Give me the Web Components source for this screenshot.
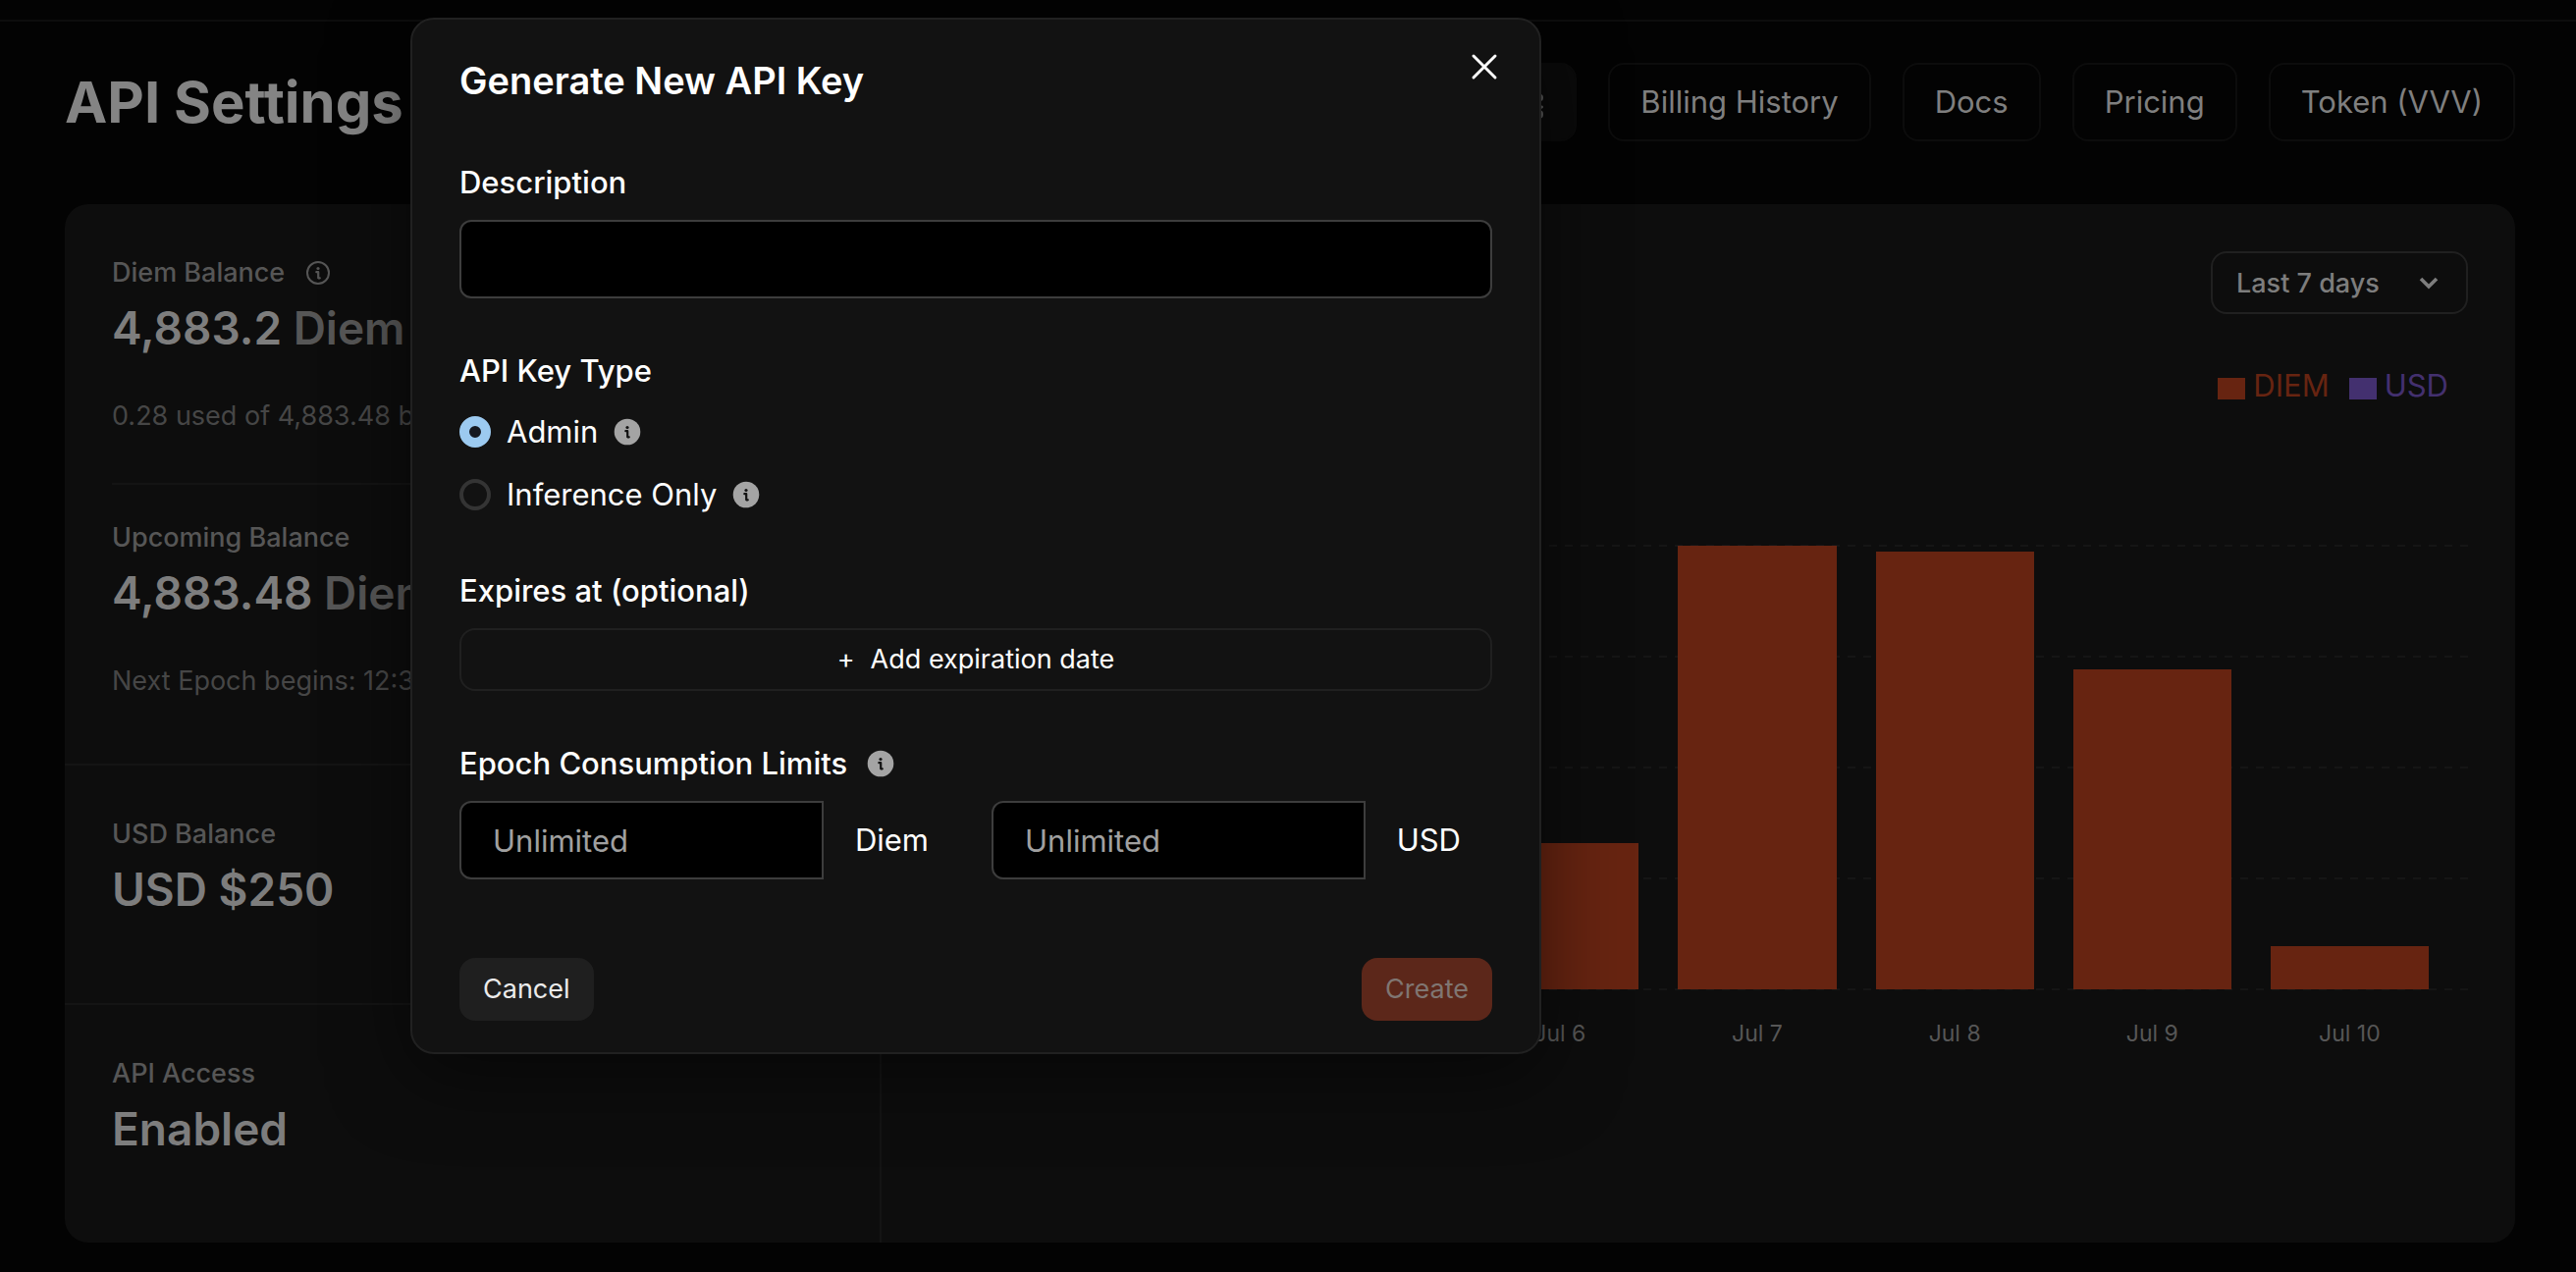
<!DOCTYPE html>
<html lang="en">
<head>
<meta charset="UTF-8">
<title>API Settings</title>
<style>
  body {
    margin: 0;
    background: #030303;
    color: #848484;
    font-family: Inter, "Liberation Sans", sans-serif;
  }
</style>
</head>
<body>
<api-settings-page></api-settings-page>

<script>
/**
 * InfoIcon: small round "i", filled by default, outlined with the "outline" attribute.
 */
class InfoIcon extends HTMLElement {
  connectedCallback() {
    this.attachShadow({ mode: 'open' });
    const outline = this.hasAttribute('outline');
    const ring = outline
      ? '<circle cx="14" cy="14" r="11" fill="none" stroke="currentColor" stroke-width="2"/>'
      : '<circle cx="14" cy="14" r="13.300" fill="currentColor"/>';
    const mark = outline ? 'currentColor' : '#121212';
    this.shadowRoot.innerHTML = `
      <style>
        :host { display: inline-flex; color: #a4a4a4; }
        :host([outline]) { color: inherit; }
        svg { width: 28px; height: 28px; }
      </style>
      <svg viewBox="0 0 28 28" aria-hidden="true">
        ${ring}
        <circle cx="14" cy="9.500" r="1.600" fill="${mark}"/>
        <path d="M12.300 13.200h1.900v6M14.200 19.300h1.600" fill="none" stroke="${mark}" stroke-width="2.200" stroke-linecap="round" stroke-linejoin="round"/>
      </svg>
    `;
  }
}
customElements.define('info-icon', InfoIcon);

/**
 * NavPill: link in the page header.
 */
class NavPill extends HTMLElement {
  connectedCallback() {
    this.attachShadow({ mode: 'open' });
    this.shadowRoot.innerHTML = `
      <style>
        :host { display: block; }
        a {
          display: block;
          padding: 18px 31px;
          border: 2px solid #0c0c0c;
          border-radius: 16px;
          color: #7f7f7f;
          font-size: 31px;
          line-height: 40px;
          white-space: nowrap;
          text-decoration: none;
        }
        :host([active]) a { background: #0a0a0a; border-color: #0a0a0a; }
        ::slotted(svg) { display: block; width: 40px; height: 40px; }
      </style>
      <a href="#"><slot></slot></a>
    `;
  }
}
customElements.define('nav-pill', NavPill);

/**
 * BalanceItem: label, value with an optional unit, optional note.
 */
class BalanceItem extends HTMLElement {
  connectedCallback() {
    this.attachShadow({ mode: 'open' });
    const unit = this.getAttribute('unit');
    const note = this.getAttribute('note');
    this.shadowRoot.innerHTML = `
      <style>
        :host { display: block; }
        .label {
          display: flex;
          align-items: center;
          gap: 20px;
          color: #565656;
          font-size: 27px;
          font-weight: 500;
          line-height: 40px;
        }
        .value {
          margin-top: 8px;
          color: #7d7d7d;
          font-size: 46px;
          font-weight: 600;
          line-height: 56px;
          white-space: nowrap;
        }
        .unit { color: #565656; }
        .note {
          margin-top: 42px;
          color: #464646;
          font-size: 27px;
          line-height: 40px;
          white-space: nowrap;
        }
      </style>
      <div class="label">${this.getAttribute('label')}<slot></slot></div>
      <div class="value">${this.getAttribute('value')}${unit ? ` <span class="unit">${unit}</span>` : ''}</div>
      ${note ? `<div class="note">${note}</div>` : ''}
    `;
  }
}
customElements.define('balance-item', BalanceItem);

/**
 * UsageChart: range drop-down, legend and daily bars.
 */
class UsageChart extends HTMLElement {
  constructor() {
    super();
    // value is a share of the axis maximum, in percent
    this.days = [
      { day: 'Jul 4', value: 0 },
      { day: 'Jul 5', value: 0 },
      { day: 'Jul 6', value: 33 },
      { day: 'Jul 7', value: 100 },
      { day: 'Jul 8', value: 98.6 },
      { day: 'Jul 9', value: 72.2 },
      { day: 'Jul 10', value: 9.8 }
    ];
  }

  connectedCallback() {
    this.attachShadow({ mode: 'open' });
    this.render();
  }

  render() {
    this.shadowRoot.innerHTML = `
      <style>
        :host { display: block; padding: 48px; }
        .toolbar { display: flex; justify-content: flex-end; }
        .range { display: grid; align-items: center; }
        .range > * { grid-area: 1 / 1; }
        select {
          appearance: none;
          width: 262px;
          height: 64px;
          padding: 0 24px;
          border: 2px solid #202020;
          border-radius: 16px;
          background: none;
          color: #7d7d7d;
          font: 500 27px Inter, "Liberation Sans", sans-serif;
        }
        .chevron {
          justify-self: end;
          width: 24px;
          height: 24px;
          margin-right: 28px;
          pointer-events: none;
        }
        .legend {
          display: flex;
          justify-content: flex-end;
          gap: 20px;
          margin: 53px 20px 0 0;
          font-size: 31px;
          line-height: 40px;
        }
        .key { display: flex; align-items: center; gap: 8px; }
        .key i { width: 28px; height: 22px; margin-top: 6px; background: currentColor; }
        .diem { color: #672411; }
        .usd { color: #43306f; }
        .plot {
          display: grid;
          height: 454px;
          margin: 142px 0 0 120px;
        }
        .plot > * { grid-area: 1 / 1; }
        .lines { width: 100%; height: 454px; }
        .lines line { stroke: #151515; stroke-width: 2; stroke-dasharray: 8 8; }
        .bars, .days {
          display: grid;
          grid-template-columns: repeat(7, 1fr);
          padding: 0 20px;
        }
        .bars { height: 452px; padding-top: 1px; align-items: end; }
        .bar { margin: 0 20px; background: #672411; }
        .days { margin: 24px 0 0 120px; color: #565656; font-size: 23px; line-height: 40px; text-align: center; }
      </style>
      <div class="toolbar">
        <div class="range">
          <select aria-label="Range">
            <option>Last 7 days</option>
            <option>Last 30 days</option>
          </select>
          <svg class="chevron" viewBox="0 0 24 24" aria-hidden="true">
            <path d="M4 8l8 8 8-8" fill="none" stroke="#7d7d7d" stroke-width="3.600"/>
          </svg>
        </div>
      </div>
      <div class="legend">
        <span class="key diem"><i></i>DIEM</span>
        <span class="key usd"><i></i>USD</span>
      </div>
      <div class="plot">
        <svg class="lines" aria-hidden="true">
          ${[1, 114, 227, 340, 453].map(y => `<line x1="0" x2="100%" y1="${y}" y2="${y}"/>`).join('')}
        </svg>
        <div class="bars">
          ${this.days.map(d => `<div class="bar" style="height: ${d.value}%"></div>`).join('')}
        </div>
      </div>
      <div class="days">
        ${this.days.map(d => `<span>${d.day}</span>`).join('')}
      </div>
    `;
  }
}
customElements.define('usage-chart', UsageChart);

/**
 * LimitField: number box with its unit to the right.
 */
class LimitField extends HTMLElement {
  connectedCallback() {
    this.attachShadow({ mode: 'open' });
    this.shadowRoot.innerHTML = `
      <style>
        :host { display: flex; align-items: center; min-width: 0; color: #fff; font-size: 31px; }
        input {
          flex: 1;
          width: 0;
          min-width: 0;
          height: 80px;
          box-sizing: border-box;
          padding: 0 32px;
          border: 2px solid #3d3d3d;
          border-radius: 12px 0 0 12px;
          background: #000;
          color: #fff;
          font: inherit;
        }
        input::placeholder { color: #a0a0a0; opacity: 1; }
        label { padding: 0 32px; }
      </style>
      <input id="limit" type="text" placeholder="Unlimited">
      <label for="limit"><slot></slot></label>
    `;
  }
}
customElements.define('limit-field', LimitField);

/**
 * ApiKeyDialog: form for a new API key.
 */
class ApiKeyDialog extends HTMLElement {
  connectedCallback() {
    this.attachShadow({ mode: 'open' });
    this.render();
  }

  render() {
    this.shadowRoot.innerHTML = `
      <style>
        :host {
          display: block;
          box-sizing: border-box;
          padding: 40px 48px 32px;
          border: 2px solid #212121;
          border-radius: 24px;
          background: #121212;
          box-shadow: 0 20px 80px rgba(0, 0, 0, 0.5);
          color: #fff;
          font-size: 31px;
          line-height: 40px;
        }
        header { display: flex; justify-content: space-between; align-items: flex-start; padding-bottom: 4px; }
        h2 { margin: 0; font-size: 38px; font-weight: 600; line-height: 44px; }
        button { font: inherit; cursor: pointer; }
        .close { display: flex; margin-right: -8px; padding: 0; border: 0; background: none; color: #fff; }
        .close svg { width: 32px; height: 32px; margin-top: -8px; }
        .title, legend { display: flex; align-items: center; gap: 20px; padding: 0; font-weight: 500; line-height: 44px; }
        .field { margin-top: 56px; }
        .description {
          box-sizing: border-box;
          width: 100%;
          height: 80px;
          margin-top: 16px;
          padding: 0 32px;
          display: block;
          border: 2px solid #3d3d3d;
          border-radius: 12px;
          background: #000;
          color: #fff;
          font: inherit;
        }
        fieldset, .consumption { margin: 52px 0 0; padding: 0; border: 0; }
        .choice { display: flex; align-items: center; gap: 16px; margin-top: 24px; }
        legend + .choice { margin-top: 20px; }
        input[type="radio"] {
          appearance: none;
          width: 32px;
          height: 32px;
          margin: 0;
          box-sizing: border-box;
          border: 4px solid #343434;
          border-radius: 50%;
        }
        input[type="radio"]:checked { border: 10px solid #9ccaf0; background: #16181f; }
        .add {
          display: flex;
          justify-content: center;
          align-items: center;
          gap: 16px;
          width: 100%;
          height: 64px;
          margin-top: 16px;
          border: 2px solid #202020;
          border-radius: 16px;
          background: none;
          color: #fff;
          font-size: 27px;
        }
        .limits { display: grid; grid-template-columns: 1fr 1fr; gap: 32px; margin-top: 16px; }
        footer { display: flex; justify-content: space-between; margin-top: 80px; }
        footer button {
          height: 64px;
          padding: 0 24px;
          border: 0;
          border-radius: 16px;
          background: #1f1f1f;
          color: #ebebeb;
          font-size: 27px;
        }
        footer button:disabled { background: #5c271a; color: #807672; }
      </style>
      <header>
        <h2>Generate New API Key</h2>
        <button class="close" aria-label="Close">
          <svg viewBox="0 0 32 32"><path d="M5 5l22 22M27 5L5 27" fill="none" stroke="currentColor" stroke-width="3" stroke-linecap="round"/></svg>
        </button>
      </header>
      <div class="field">
        <label class="title" for="description">Description</label>
        <input class="description" id="description" type="text">
      </div>
      <fieldset>
        <legend>API Key Type</legend>
        <div class="choice">
          <input type="radio" name="type" id="admin" checked>
          <label for="admin">Admin</label>
          <info-icon></info-icon>
        </div>
        <div class="choice">
          <input type="radio" name="type" id="inference">
          <label for="inference">Inference Only</label>
          <info-icon></info-icon>
        </div>
      </fieldset>
      <div class="field">
        <div class="title">Expires at (optional)</div>
        <button class="add"><span>+</span><span>Add expiration date</span></button>
      </div>
      <div class="consumption">
        <div class="title">Epoch Consumption Limits<info-icon></info-icon></div>
        <div class="limits">
          <limit-field>Diem</limit-field>
          <limit-field>USD</limit-field>
        </div>
      </div>
      <footer>
        <button>Cancel</button>
        <button disabled>Create</button>
      </footer>
    `;
  }
}
customElements.define('api-key-dialog', ApiKeyDialog);

/**
 * ApiSettingsPage: dimmed page with the dialog over it.
 */
class ApiSettingsPage extends HTMLElement {
  connectedCallback() {
    this.attachShadow({ mode: 'open' });
    this.render();
  }

  render() {
    this.shadowRoot.innerHTML = `
      <style>
        :host { display: block; position: relative; padding-bottom: 30px; }
        .topbar { height: 20px; border-bottom: 2px solid #0d0d0d; }
        .head {
          display: flex;
          justify-content: space-between;
          align-items: center;
          padding: 42px 62px 64px 66px;
        }
        h1 { margin: 0; font-size: 58px; font-weight: 700; line-height: 80px; white-space: nowrap; }
        nav { display: flex; gap: 32px; }
        .panel {
          display: grid;
          grid-template-columns: 1fr 2fr;
          min-height: 1058px;
          margin: 0 62px 0 66px;
          border-radius: 24px;
          background: #0d0d0d;
        }
        .balances { border-right: 2px solid #141414; }
        .group { padding: 50px 48px; border-bottom: 2px solid #141414; }
        .group:last-child { border-bottom: 0; }
        .diem { padding-bottom: 64px; }
        .diem balance-item + balance-item { margin-top: 48px; padding-top: 34px; border-top: 2px solid #141414; }
        .usd { padding-bottom: 88px; }
        api-key-dialog {
          position: absolute;
          top: 18px;
          left: 418px;
          width: 1152px;
        }
      </style>
      <div class="topbar"></div>
      <div class="head">
        <h1>API Settings</h1>
        <nav>
          <nav-pill active>
            <svg viewBox="0 0 40 40" fill="#555" role="img" aria-label="Settings">
              <ellipse cx="36" cy="15.500" rx="3" ry="3.500"/>
              <ellipse cx="36" cy="25" rx="3" ry="1.800"/>
              <ellipse cx="36" cy="32.500" rx="3" ry="4"/>
            </svg>
          </nav-pill>
          <nav-pill>Billing History</nav-pill>
          <nav-pill>Docs</nav-pill>
          <nav-pill>Pricing</nav-pill>
          <nav-pill>Token (VVV)</nav-pill>
        </nav>
      </div>
      <main class="panel">
        <div class="balances">
          <div class="group diem">
            <balance-item label="Diem Balance" value="4,883.2" unit="Diem" note="0.28 used of 4,883.48 balance">
              <info-icon outline></info-icon>
            </balance-item>
            <balance-item label="Upcoming Balance" value="4,883.48" unit="Diem" note="Next Epoch begins: 12:30"></balance-item>
          </div>
          <div class="group usd">
            <balance-item label="USD Balance" value="USD $250"></balance-item>
          </div>
          <div class="group">
            <balance-item label="API Access" value="Enabled"></balance-item>
          </div>
        </div>
        <usage-chart></usage-chart>
      </main>
      <api-key-dialog role="dialog" aria-label="Generate New API Key"></api-key-dialog>
    `;
  }
}
customElements.define('api-settings-page', ApiSettingsPage);
</script>
</body>
</html>
